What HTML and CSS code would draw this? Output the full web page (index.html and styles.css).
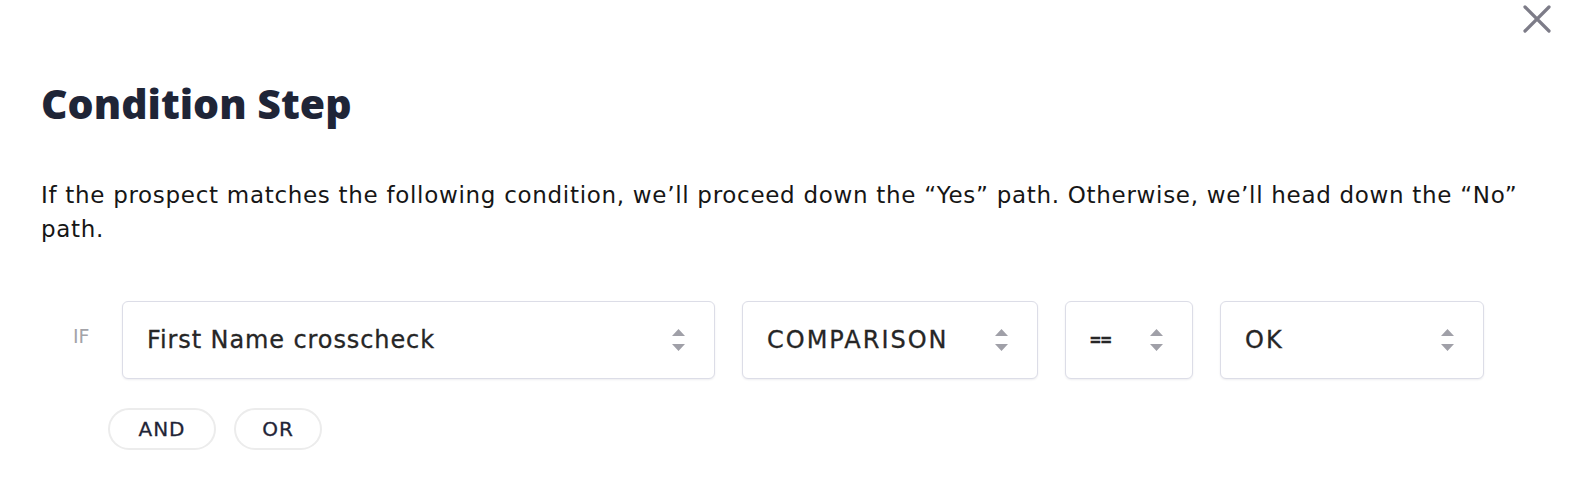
FILE: index.html
```html
<!DOCTYPE html>
<html lang="en">
<head>
    <meta charset="UTF-8">
    <meta name="viewport" content="width=device-width, initial-scale=1.0">
    <title>Condition Step</title>
    <link rel="stylesheet" href="styles.css">
</head>
<body>
    <div class="modal">
        <button class="close-btn" aria-label="Close">
            <svg width="28" height="28" viewBox="0 0 28 28"><path d="M2 2 L26 26 M26 2 L2 26" stroke="currentColor" stroke-width="3.2" stroke-linecap="round"/></svg>
        </button>

        <h2>Condition Step</h2>
        <p class="intro">If the prospect matches the following condition, we’ll proceed down the “Yes” path. Otherwise, we’ll head down the “No” path.</p>

        <!-- Linha da condição -->
        <div class="condition-row">
            <span class="if-label">IF</span>
            <div class="select-box w-field">
                <span>First Name crosscheck</span>
                <svg class="arrows" width="13" height="22" viewBox="0 0 13 22"><path d="M6.5 0 L13 7 H0 Z M6.5 22 L13 15 H0 Z" fill="#a0a0a8"/></svg>
            </div>
            <div class="select-box w-type">
                <span class="caps">COMPARISON</span>
                <svg class="arrows" width="13" height="22" viewBox="0 0 13 22"><path d="M6.5 0 L13 7 H0 Z M6.5 22 L13 15 H0 Z" fill="#a0a0a8"/></svg>
            </div>
            <div class="select-box w-op">
                <span class="op">==</span>
                <svg class="arrows" width="13" height="22" viewBox="0 0 13 22"><path d="M6.5 0 L13 7 H0 Z M6.5 22 L13 15 H0 Z" fill="#a0a0a8"/></svg>
            </div>
            <div class="select-box w-value">
                <span class="caps">OK</span>
                <svg class="arrows" width="13" height="22" viewBox="0 0 13 22"><path d="M6.5 0 L13 7 H0 Z M6.5 22 L13 15 H0 Z" fill="#a0a0a8"/></svg>
            </div>
        </div>

        <div class="logic-buttons">
            <button class="pill and">AND</button>
            <button class="pill or">OR</button>
        </div>
    </div>
</body>
</html>
```

FILE: styles.css
```css
/* Base */
body { margin: 0; background: #ffffff; font-family: "DejaVu Sans", "Open Sans", sans-serif; }
.modal { position: relative; padding: 78px 41px 40px 41px; }

/* Fechar */
.close-btn { position: absolute; top: 5px; right: 33px; width: 28px; height: 28px; padding: 0; border: none; background: none; color: #7d7c88; cursor: pointer; }
.close-btn svg { display: block; }

/* Título */
h2 { margin: 0; font-family: "Open Sans", sans-serif; font-size: 41px; line-height: 50px; font-weight: 800; color: #1f2537; }

/* Texto */
.intro { margin: 50px 0 0 0; font-size: 23px; line-height: 34px; letter-spacing: 0.7px; color: #161616; }

/* Condição */
.condition-row { display: flex; align-items: flex-start; margin-top: 55px; padding-left: 32px; }
.if-label { width: 49px; padding-top: 24px; font-size: 19px; color: #a3a3a8; }
.select-box { display: flex; align-items: center; justify-content: space-between; box-sizing: border-box; height: 78px; padding: 0 29px 0 24px; margin-right: 27px; border: 1.5px solid #dcdde7; border-radius: 6px; background: #fff; box-shadow: 0 1px 2px rgba(30, 30, 60, 0.08); font-size: 24px; letter-spacing: 0.9px; color: #262626; -webkit-text-stroke: 0.3px #262626; }
.select-box .caps { letter-spacing: 2px; }
.select-box .op { font-family: "Open Sans", sans-serif; font-weight: 700; font-size: 19px; letter-spacing: 0; }
.w-field { width: 593px; }
.w-type { width: 296px; }
.w-op { width: 128px; }
.w-value { width: 264px; margin-right: 0; }
.arrows { flex-shrink: 0; }

/* Botões AND / OR */
.logic-buttons { display: flex; gap: 18px; margin-top: 29px; padding-left: 67px; }
.pill { height: 42px; padding: 0; border: 2px solid #ececec; border-radius: 21px; background: #fff; font-family: inherit; font-size: 20px; letter-spacing: 1px; color: #1f2537; -webkit-text-stroke: 0.3px #1f2537; cursor: pointer; }
.pill.and { width: 108px; }
.pill.or { width: 88px; }
```
